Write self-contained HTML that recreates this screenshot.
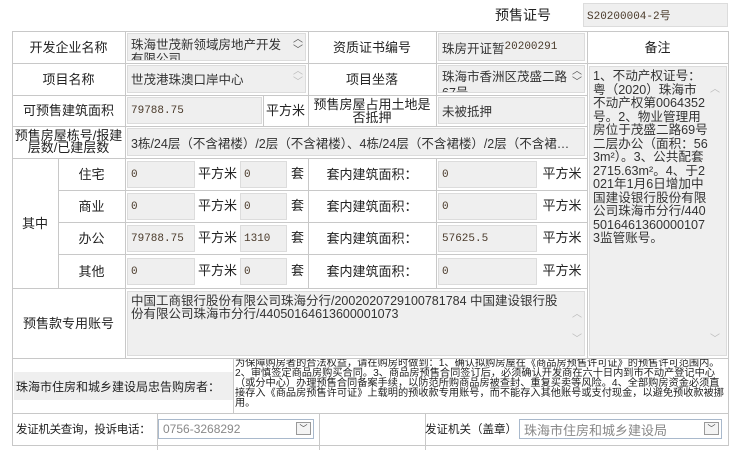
<!DOCTYPE html>
<html><head><meta charset="utf-8"><style>
*{margin:0;padding:0;box-sizing:border-box}
body{width:750px;height:450px;background:#fff;position:relative;overflow:hidden;font-family:"Liberation Sans","Noto Sans CJK SC",sans-serif;font-size:13px;color:#222}
div{position:absolute}
.l{border:1px solid #c8c8c8}
.c{display:flex;align-items:center;justify-content:center;text-align:center;line-height:13px}
.in{background:#efefef;border:1px solid #dcdcdc;display:flex;align-items:center;padding-left:3px;font-size:12.5px;color:#333;white-space:nowrap;overflow:hidden}
.n{font-family:"Liberation Mono",monospace;color:#4a3a2a;font-size:11px}
.hl{position:absolute;height:1px;background:#c8c8c8}
.vl{position:absolute;width:1px;background:#c8c8c8}
.sel{background:#fff;border:1px solid #a9b9cc;color:#888;font-size:12px;display:flex;align-items:center;padding-left:4px}
.arr{position:absolute;right:2px;top:2px;width:15px;height:13px;border:1px solid #999;background:#f4f4f4;font-size:8px;display:flex;align-items:center;justify-content:center;color:#333}
</style></head><body>
<div class="c" style="left:480px;top:4px;width:86px;height:22px;font-size:14px">预售证号</div>
<div class="in" style="left:583px;top:3px;width:145px;height:24px"><span class="n">S20200004-2号</span></div>

<div class="l" style="left:12px;top:31px;width:717px;height:415px;border-color:#c8c8c8"></div>
<div class="hl" style="left:12px;top:63px;width:716px"></div>
<div class="hl" style="left:12px;top:95px;width:575px"></div>
<div class="hl" style="left:12px;top:126px;width:575px"></div>
<div class="hl" style="left:12px;top:158px;width:575px"></div>
<div class="hl" style="left:58px;top:190px;width:529px"></div>
<div class="hl" style="left:58px;top:222px;width:529px"></div>
<div class="hl" style="left:58px;top:254px;width:529px"></div>
<div class="hl" style="left:12px;top:288px;width:575px"></div>
<div class="hl" style="left:12px;top:358px;width:716px"></div>
<div class="hl" style="left:12px;top:413px;width:716px"></div>
<div class="hl" style="left:12px;top:445px;width:716px"></div>
<div class="vl" style="left:125px;top:31px;height:327px"></div>
<div class="vl" style="left:58px;top:158px;height:130px"></div>
<div class="vl" style="left:308px;top:31px;height:64px"></div>
<div class="vl" style="left:308px;top:95px;height:31px"></div>
<div class="vl" style="left:263px;top:95px;height:31px"></div>
<div class="vl" style="left:308px;top:158px;height:130px"></div>
<div class="vl" style="left:436px;top:31px;height:95px"></div>
<div class="vl" style="left:436px;top:158px;height:130px"></div>
<div class="vl" style="left:587px;top:31px;height:327px"></div>
<div class="vl" style="left:233px;top:358px;height:55px"></div>
<div class="vl" style="left:157px;top:413px;height:37px"></div>
<div class="vl" style="left:319px;top:413px;height:37px"></div>
<div class="vl" style="left:425px;top:413px;height:37px"></div>

<div class="c" style="left:12px;top:31px;width:113px;height:32px">开发企业名称</div>
<div class="in" style="left:127px;top:33px;width:179px;height:28px;align-items:flex-start;white-space:normal;line-height:14px;padding-top:4px;padding-right:20px">珠海世茂新领域房地产开发有限公司</div>
<div style="left:293px;top:34px;font-size:10px;line-height:11px;color:#555">︿<br>﹀</div>
<div class="c" style="left:308px;top:31px;width:128px;height:32px">资质证书编号</div>
<div class="in" style="left:438px;top:33px;width:147px;height:28px">珠房开证暂<span class="n">20200291</span></div>
<div class="c" style="left:587px;top:31px;width:141px;height:32px">备注</div>
<div class="c" style="left:12px;top:63px;width:113px;height:32px">项目名称</div>
<div class="in" style="left:127px;top:65px;width:179px;height:28px;align-items:flex-start;padding-top:3px">世茂港珠澳口岸中心</div>
<div style="left:293px;top:66px;font-size:10px;line-height:11px;color:#bbb">︿<br>﹀</div>
<div class="c" style="left:308px;top:63px;width:128px;height:32px">项目坐落</div>
<div class="in" style="left:438px;top:65px;width:147px;height:28px;align-items:flex-start;white-space:normal;line-height:16px;padding-top:3px;padding-right:16px">珠海市香洲区茂盛二路67号</div>
<div style="left:572px;top:66px;font-size:10px;line-height:11px;color:#555">︿<br>﹀</div>
<div class="c" style="left:12px;top:95px;width:113px;height:31px">可预售建筑面积</div>
<div class="in" style="left:127px;top:97px;width:135px;height:27px"><span class="n">79788.75</span></div>
<div class="c" style="left:263px;top:95px;width:45px;height:31px">平方米</div>
<div class="c" style="left:308px;top:95px;width:128px;height:31px;line-height:13px">预售房屋占用土地是否抵押</div>
<div class="in" style="left:438px;top:97px;width:147px;height:27px">未被抵押</div>
<div class="c" style="left:12px;top:126px;width:113px;height:32px;line-height:12px">预售房屋栋号/报建层数/已建层数</div>
<div class="in" style="left:127px;top:128px;width:458px;height:28px">3栋/24层（不含裙楼）/2层（不含裙楼）、4栋/24层（不含裙楼）/2层（不含裙…</div>
<div class="c" style="left:12px;top:158px;width:46px;height:130px">其中</div>
<div class="c" style="left:58px;top:158px;width:67px;height:32px">住宅</div>
<div class="c" style="left:58px;top:190px;width:67px;height:32px">商业</div>
<div class="c" style="left:58px;top:222px;width:67px;height:32px">办公</div>
<div class="c" style="left:58px;top:254px;width:67px;height:34px">其他</div>

<div class="in" style="left:127px;top:161px;width:68px;height:27px"><span class="n">0</span></div>
<div class="in" style="left:127px;top:193px;width:68px;height:27px"><span class="n">0</span></div>
<div class="in" style="left:127px;top:225px;width:68px;height:27px"><span class="n">79788.75</span></div>
<div class="in" style="left:127px;top:258px;width:68px;height:27px"><span class="n">0</span></div>
<div class="c" style="left:195px;top:160px;width:45px;height:26px">平方米</div>
<div class="c" style="left:195px;top:192px;width:45px;height:26px">平方米</div>
<div class="c" style="left:195px;top:224px;width:45px;height:26px">平方米</div>
<div class="c" style="left:195px;top:257px;width:45px;height:26px">平方米</div>
<div class="in" style="left:240px;top:161px;width:47px;height:27px"><span class="n">0</span></div>
<div class="in" style="left:240px;top:193px;width:47px;height:27px"><span class="n">0</span></div>
<div class="in" style="left:240px;top:225px;width:47px;height:27px"><span class="n">1310</span></div>
<div class="in" style="left:240px;top:258px;width:47px;height:27px"><span class="n">0</span></div>
<div class="c" style="left:287px;top:160px;width:21px;height:26px">套</div>
<div class="c" style="left:287px;top:192px;width:21px;height:26px">套</div>
<div class="c" style="left:287px;top:224px;width:21px;height:26px">套</div>
<div class="c" style="left:287px;top:257px;width:21px;height:26px">套</div>
<div class="c" style="left:308px;top:158px;width:128px;height:32px">套内建筑面积：</div>
<div class="c" style="left:308px;top:190px;width:128px;height:32px">套内建筑面积：</div>
<div class="c" style="left:308px;top:222px;width:128px;height:32px">套内建筑面积：</div>
<div class="c" style="left:308px;top:254px;width:128px;height:34px">套内建筑面积：</div>
<div class="in" style="left:438px;top:161px;width:99px;height:27px"><span class="n">0</span></div>
<div class="in" style="left:438px;top:193px;width:99px;height:27px"><span class="n">0</span></div>
<div class="in" style="left:438px;top:225px;width:99px;height:27px"><span class="n">57625.5</span></div>
<div class="in" style="left:438px;top:258px;width:99px;height:27px"><span class="n">0</span></div>
<div class="c" style="left:537px;top:160px;width:50px;height:26px">平方米</div>
<div class="c" style="left:537px;top:192px;width:50px;height:26px">平方米</div>
<div class="c" style="left:537px;top:224px;width:50px;height:26px">平方米</div>
<div class="c" style="left:537px;top:257px;width:50px;height:26px">平方米</div>

<div class="in" style="left:589px;top:66px;width:138px;height:290px;align-items:flex-start;white-space:normal;line-height:13.5px;font-size:12.6px;padding:3px 17px 0 3px;word-break:break-all">1、不动产权证号：粤（2020）珠海市不动产权第0064352号。2、物业管理用房位于茂盛二路69号二层办公（面积：563m²）。3、公共配套2715.63m²。4、于2021年1月6日增加中国建设银行股份有限公司珠海市分行/44050164613600001073监管账号。</div>
<div style="left:710px;top:80px;font-size:10px;color:#bbb">︿</div>
<div style="left:710px;top:330px;font-size:10px;color:#bbb">﹀</div>

<div class="c" style="left:12px;top:288px;width:113px;height:70px">预售款专用账号</div>
<div class="in" style="left:127px;top:291px;width:458px;height:65px;align-items:flex-start;white-space:normal;line-height:13px;padding:3px 24px 0 3px">中国工商银行股份有限公司珠海分行/2002020729100781784 中国建设银行股份有限公司珠海市分行/44050164613600001073</div>
<div style="left:572px;top:305px;font-size:10px;color:#bbb">︿</div>
<div style="left:572px;top:330px;font-size:10px;color:#bbb">﹀</div>

<div style="left:14px;top:372px;width:219px;height:28px;background:#efefef;display:flex;align-items:center;padding-left:2px;font-size:12px">珠海市住房和城乡建设局忠告购房者：</div>
<div style="left:235px;top:359px;width:493px;height:54px;font-size:10.2px;line-height:10px;overflow:hidden">为保障购房者的合法权益，请在购房时做到：1、确认拟购房屋在《商品房预售许可证》的预售许可范围内。2、审慎签定商品房购买合同。3、商品房预售合同签订后，必须确认开发商在六十日内到市不动产登记中心（或分中心）办理预售合同备案手续，以防范所购商品房被查封、重复买卖等风险。4、全部购房资金必须直接存入《商品房预售许可证》上载明的预收款专用账号，而不能存入其他账号或支付现金，以避免预收款被挪用。</div>

<div style="left:16px;top:413px;width:141px;height:32px;display:flex;align-items:center;font-size:11.5px;white-space:nowrap;letter-spacing:-0.3px">发证机关查询，投诉电话：</div>
<div class="sel" style="left:158px;top:419px;width:156px;height:20px">0756-3268292<div class="arr">﹀</div></div>
<div style="left:425px;top:413px;width:95px;height:32px;display:flex;align-items:center;font-size:11.5px;white-space:nowrap">发证机关（盖章）</div>
<div class="sel" style="left:519px;top:419px;width:203px;height:20px;font-size:13px">珠海市住房和城乡建设局<div class="arr">﹀</div></div>
</body></html>
